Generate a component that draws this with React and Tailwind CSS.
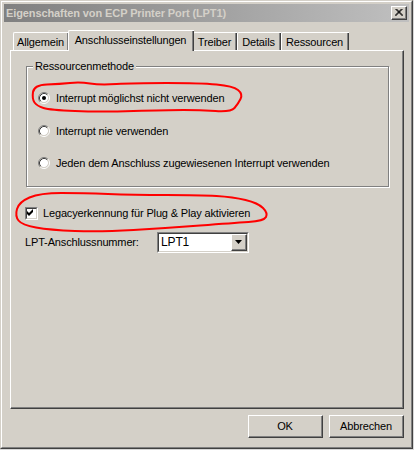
import React from "react";

const FONT = "font-['Liberation_Sans',Arial,sans-serif]";

function smooth(pts) {
  const n = pts.length;
  const mid = (a, b) => [(a[0] + b[0]) / 2, (a[1] + b[1]) / 2];
  let m = mid(pts[n - 1], pts[0]);
  let d = `M${m[0]} ${m[1]}`;
  for (let i = 0; i < n; i++) {
    const p = pts[i];
    const q = mid(p, pts[(i + 1) % n]);
    d += ` Q${p[0]} ${p[1]} ${q[0]} ${q[1]}`;
  }
  return d;
}

const loop1 = [
  [34, 85], [60, 84], [80, 82], [100, 85], [133, 83], [200, 83], [233, 86],
  [243, 94], [238, 104], [231, 112], [200, 110], [167, 110], [100, 112], [50, 110],
  [37, 106], [32, 99],
];
const loop2 = [
  [19, 202], [40, 193], [83, 193], [133, 195], [200, 195], [233, 197], [258, 203],
  [268, 213], [264, 221], [233, 223], [167, 228], [100, 232], [50, 230], [22, 225],
  [15, 216],
];

function Raised({ className = "", children }) {
  return (
    <div className={`flex border border-t-white border-l-white border-r-[#404040] border-b-[#404040] ${className}`}>
      <div className="flex flex-1 items-center justify-center border-r border-b border-[#808080] bg-[#d4d0c8]">
        {children}
      </div>
    </div>
  );
}

function Sunken({ className = "", inner = "", children }) {
  return (
    <div className={`flex border border-t-[#808080] border-l-[#808080] border-r-white border-b-white ${className}`}>
      <div className={`flex flex-1 border border-t-[#404040] border-l-[#404040] border-r-[#d4d0c8] border-b-[#d4d0c8] ${inner}`}>
        {children}
      </div>
    </div>
  );
}

function Radio({ checked }) {
  return (
    <svg width="12" height="12" viewBox="0 0 12 12" className="shrink-0">
      <circle cx="6" cy="6" r="4.2" fill="#fff" />
      <path d="M2.11 9.89 A5.5 5.5 0 0 1 9.89 2.11" fill="none" stroke="#808080" />
      <path d="M9.89 2.11 A5.5 5.5 0 0 1 2.11 9.89" fill="none" stroke="#fff" />
      <path d="M2.82 9.18 A4.5 4.5 0 0 1 9.18 2.82" fill="none" stroke="#404040" />
      <path d="M9.18 2.82 A4.5 4.5 0 0 1 2.82 9.18" fill="none" stroke="#d4d0c8" />
      {checked && <circle cx="6" cy="6" r="2" fill="#000" />}
    </svg>
  );
}

function Tab({ label, w, selected }) {
  if (selected) {
    return (
      <div
        className={`relative z-10 -mb-px flex h-[21px] ${w} -mx-px rounded-tl-[2px] border-t border-l border-white bg-[#d4d0c8]`}
      >
        <div className="flex flex-1 items-center justify-center border-r border-[#404040]">
          <div className="flex h-full flex-1 items-center justify-center border-r border-[#808080] pb-px">
            {label}
          </div>
        </div>
      </div>
    );
  }
  return (
    <div className={`flex h-[18px] ${w} rounded-tl-[2px] border-t border-l border-white bg-[#d4d0c8]`}>
      <div className="flex flex-1 border-r border-[#404040]">
        <div className="flex flex-1 items-center justify-center border-r border-[#808080] pt-px">
          {label}
        </div>
      </div>
    </div>
  );
}

export default function App() {
  return (
    <div className={`relative h-[450px] w-[414px] overflow-hidden bg-[#d8d8d8] ${FONT} text-[11px] leading-[13px] tracking-[-0.15px] text-black`}>
      {/* window */}
      <div className="h-[449px] w-[413px] border border-t-[#d4d0c8] border-l-[#d4d0c8] border-r-[#404040] border-b-[#404040]">
        <div className="flex h-full flex-col border border-t-white border-l-white border-r-[#808080] border-b-[#808080] bg-[#d4d0c8] p-[2px]">
          {/* title bar */}
          <div className="flex h-[18px] items-center bg-gradient-to-r from-[#808080] to-[#c0c0c0] pl-[2px] pr-[2px]">
            <span className="flex-1 text-[11px] font-bold tracking-[-0.1px] text-[#d4d0c8]">
              Eigenschaften von ECP Printer Port (LPT1)
            </span>
            <Raised className="h-[14px] w-[16px]">
              <svg width="8" height="7" viewBox="0 0 8 7">
                <path d="M0.5 0 L7.5 7 M1.5 0 L8 6.5 M7.5 0 L0.5 7 M6.5 0 L0 6.5" stroke="#000" strokeWidth="1" fill="none" />
              </svg>
            </Raised>
          </div>

          {/* tabs */}
          <div className="ml-[9px] mt-[8px] flex items-end">
            <Tab label="Allgemein" w="w-[56px]" />
            <Tab label="Anschlusseinstellungen" w="w-[126px]" selected />
            <Tab label="Treiber" w="w-[44px]" />
            <Tab label="Details" w="w-[44px]" />
            <Tab label="Ressourcen" w="w-[68px]" />
          </div>

          {/* panel */}
          <div className="ml-[6px] h-[359px] w-[394px] border-t border-l border-white border-r border-b border-r-[#404040] border-b-[#404040]">
            <div className="h-full border-r border-b border-[#808080] pl-[15px] pt-[15px]">
              {/* group box */}
              <div className="relative h-[121px] w-[363px] border border-[#808080] shadow-[inset_1px_1px_0_#fff,1px_1px_0_#fff]">
                <span className="absolute -top-[7px] left-[6px] bg-[#d4d0c8] px-[2px]">Ressourcenmethode</span>
                <div className="flex flex-col pl-[11px] pt-[23px]">
                  <div className="flex h-[16px] items-center gap-[5px]">
                    <Radio checked />
                    <span className="pl-px">Interrupt möglichst nicht verwenden</span>
                  </div>
                  <div className="mt-[17px] flex h-[16px] items-center gap-[5px]">
                    <Radio />
                    <span className="pl-px">Interrupt nie verwenden</span>
                  </div>
                  <div className="mt-[16px] flex h-[16px] items-center gap-[5px]">
                    <Radio />
                    <span className="pl-px">Jeden dem Anschluss zugewiesenen Interrupt verwenden</span>
                  </div>
                </div>
              </div>

              {/* checkbox */}
              <div className="-ml-px mt-[18px] flex h-[16px] items-center gap-[5px]">
                <Sunken className="h-[13px] w-[13px]" inner="bg-white">
                  <svg width="9" height="9" viewBox="0 0 9 9" className="-ml-px -mt-px">
                    <polygon points="1,3 3,5 7,1 7,4 3,8 1,6" fill="#000" />
                  </svg>
                </Sunken>
                <span>Legacyerkennung für Plug &amp; Play aktivieren</span>
              </div>

              {/* LPT row */}
              <div className="-ml-px mt-[11px] flex h-[21px] items-center">
                <span className="w-[132px]">LPT-Anschlussnummer:</span>
                <Sunken className="h-[21px] w-[92px]" inner="bg-white items-center">
                  <span className="flex-1 pl-[2px] text-[12px]">LPT1</span>
                  <Raised className="h-[17px] w-[16px]">
                    <svg width="7" height="4" viewBox="0 0 7 4">
                      <polygon points="0,0 7,0 3.5,4" fill="#000" />
                    </svg>
                  </Raised>
                </Sunken>
              </div>
            </div>
          </div>

          {/* buttons */}
          <div className="mt-[6px] flex w-[400px] justify-end gap-[6px]">
            <Raised className="h-[23px] w-[75px]">OK</Raised>
            <Raised className="h-[23px] w-[75px]">Abbrechen</Raised>
          </div>
        </div>
      </div>

      {/* red hand-drawn markings */}
      <svg className="pointer-events-none absolute left-0 top-0" width="414" height="450">
        <path d={smooth(loop1)} fill="none" stroke="#ff0000" strokeWidth="2" strokeLinejoin="round" />
        <path d={smooth(loop2)} fill="none" stroke="#ff0000" strokeWidth="2" strokeLinejoin="round" />
      </svg>
    </div>
  );
}
